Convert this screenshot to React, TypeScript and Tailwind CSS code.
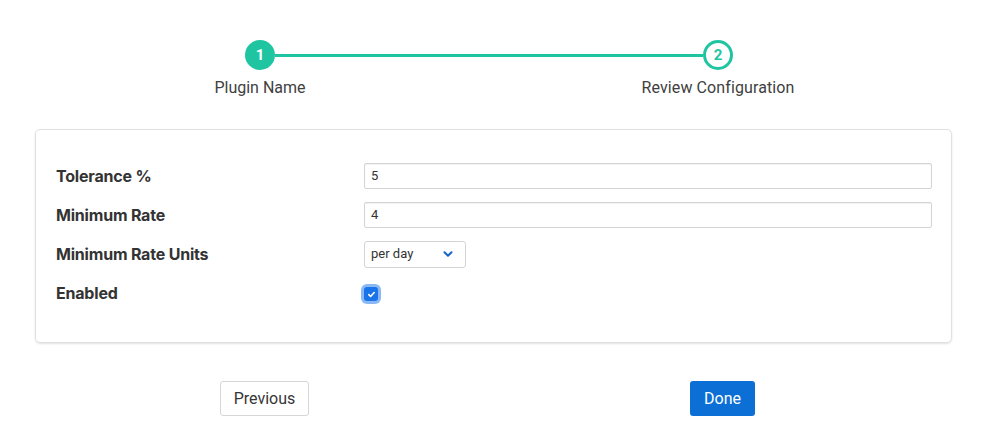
import { ChevronDown } from 'lucide-react';

const fields = [
  { label: 'Tolerance %', value: '5' },
  { label: 'Minimum Rate', value: '4' },
];

export default function App() {
  return (
    <div className="w-[982px] h-[428px] bg-white text-[#363636]" style={{ fontFamily: 'Roboto, "Liberation Sans", sans-serif' }}>
      {/* stepper */}
      <div className="pt-[40px]">
        <div className="relative ml-[170px] w-[638px] flex justify-between">
          <div className="absolute left-[105px] right-[105px] top-[14px] h-[3px] bg-[#1fc5a1]" />
          <div className="w-[180px] flex flex-col items-center">
            <div className="relative z-10 w-[30px] h-[30px] rounded-full bg-[#1fc5a1] text-white text-[15px] font-bold flex items-center justify-center">1</div>
            <div className="mt-[6px] text-[16px] text-[#404040] whitespace-nowrap">Plugin Name</div>
          </div>
          <div className="w-[180px] flex flex-col items-center">
            <div className="relative z-10 w-[30px] h-[30px] rounded-full bg-white border-[3px] border-[#1fc5a1] text-[#1fc5a1] text-[15px] font-bold flex items-center justify-center">2</div>
            <div className="mt-[6px] text-[16px] text-[#404040] tracking-[0.1px] whitespace-nowrap">Review Configuration</div>
          </div>
        </div>
      </div>

      {/* card */}
      <div className="ml-[35px] mt-[29px] w-[917px] h-[214px] border border-[#e0e0e0] rounded-[5px] shadow-[0_1px_2px_rgba(0,0,0,0.12)] pl-[20px] pr-[19px] pt-[33px]">
        <div className="flex flex-col gap-[13px]" style={{ fontFamily: 'Inter, "Liberation Sans", sans-serif' }}>
          {fields.map((f) => (
            <div key={f.label} className="flex items-center h-[26px]">
              <div className="w-[308px] text-[16px] font-bold text-[#333] tracking-[-0.2px]">{f.label}</div>
              <div className="flex-1 h-[26px] border border-[#d4d4d4] rounded-[2px] shadow-[inset_0_1px_1px_rgba(0,0,0,0.06)] px-[6px] flex items-center text-[13px] text-[#333]" style={{ fontFamily: 'Roboto, sans-serif' }}>{f.value}</div>
            </div>
          ))}
          <div className="flex items-center h-[26px]">
            <div className="w-[308px] text-[16px] font-bold text-[#333] tracking-[-0.2px]">Minimum Rate Units</div>
            <div className="w-[102px] h-[27px] border border-[#d4d4d4] rounded-[3px] pl-[6px] pr-[10px] flex items-center justify-between text-[13px] text-[#333]" style={{ fontFamily: 'Roboto, sans-serif' }}>
              <span>per day</span>
              <ChevronDown size={14} strokeWidth={3.5} className="text-[#1766c7]" />
            </div>
          </div>
          <div className="flex items-center h-[26px]">
            <div className="w-[308px] text-[16px] font-bold text-[#333] tracking-[-0.2px]">Enabled</div>
            <div className="w-[14px] h-[14px] mt-[2px] rounded-[3px] bg-[#1a73e8] ring-[3px] ring-[#8ab8f5] flex items-center justify-center">
              <svg width="9" height="9" viewBox="0 0 10 10" fill="none">
                <path d="M2 5.2l2 2L8 2.8" stroke="white" strokeWidth="1.8" strokeLinecap="round" strokeLinejoin="round" />
              </svg>
            </div>
          </div>
        </div>
      </div>

      {/* buttons */}
      <div className="mt-[38px] flex">
        <button className="ml-[220px] w-[89px] h-[35px] border border-[#d6d6d6] rounded-[3px] bg-white text-[16px] text-[#363636]">Previous</button>
        <button className="ml-[381px] w-[65px] h-[35px] rounded-[3px] bg-[#0b6fd6] text-[16px] text-white">Done</button>
      </div>
    </div>
  );
}
